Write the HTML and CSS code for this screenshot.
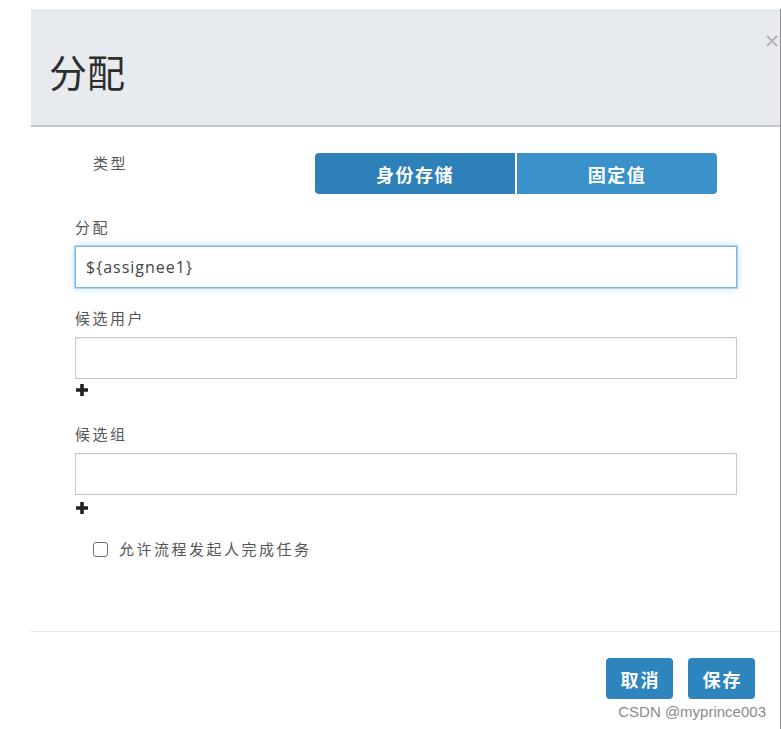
FILE: index.html
```html
<!DOCTYPE html>
<html lang="zh-CN">
<head>
<meta charset="utf-8">
<title>分配</title>
<link rel="stylesheet" href="styles.css">
</head>
<body>
<div class="page">
  <div class="modal">
    <div class="modal-header">
      <h1 class="modal-title">分配</h1>
      <span class="close" aria-label="close">
        <svg width="12" height="12" viewBox="0 0 12 12"><path d="M1 1 L11 11 M11 1 L1 11" stroke="#b2b4b6" stroke-width="1.8" fill="none"/></svg>
      </span>
    </div>
    <div class="modal-body">
      <div class="type-row">
        <div class="type-label">类型</div>
        <div class="btn-group">
          <button class="seg seg-active">身份存储</button>
          <button class="seg seg-second">固定值</button>
        </div>
      </div>

      <div class="field first">
        <label class="field-label">分配</label>
        <div class="input focused">${assignee1}</div>
      </div>

      <div class="field">
        <label class="field-label">候选用户</label>
        <div class="input"></div>
        <div class="plus plus-a">
          <svg width="14" height="14" viewBox="0 0 14 14"><path d="M7 1 V13 M1 7 H13" stroke="#222" stroke-width="3.6" fill="none"/></svg>
        </div>
      </div>

      <div class="field after-plus">
        <label class="field-label">候选组</label>
        <div class="input"></div>
        <div class="plus plus-b">
          <svg width="14" height="14" viewBox="0 0 14 14"><path d="M7 1 V13 M1 7 H13" stroke="#222" stroke-width="3.6" fill="none"/></svg>
        </div>
      </div>

      <div class="check-row">
        <input type="checkbox" class="check">
        <span class="check-text">允许流程发起人完成任务</span>
      </div>
    </div>
    <div class="modal-footer">
      <button class="btn">取消</button>
      <button class="btn">保存</button>
    </div>
  </div>
  <div class="watermark">CSDN @myprince003</div>
</div>
</body>
</html>
```

FILE: styles.css
```css
* { box-sizing: border-box; }

html, body {
  margin: 0;
  padding: 0;
  background: #ffffff;
}

body {
  width: 781px;
  height: 729px;
  overflow: hidden;
  font-family: "Noto Sans CJK SC", "Noto Sans", sans-serif;
}

.page {
  position: relative;
  height: 729px;
  padding: 9px 0 0 31px;
}

.modal {
  width: 750px;
  height: 720px;
  border-right: 1px solid #8e8e8e;
  background: #fff;
}

.modal-header {
  display: flex;
  justify-content: space-between;
  align-items: flex-start;
  height: 118px;
  padding: 26px 2px 0 18px;
  background: #e7ebef;
  border-bottom: 2px solid #bfc6cd;
}

.modal-title {
  margin: 17px 0 0 0;
  font-size: 38px;
  line-height: 38px;
  font-weight: 400;
  color: #2e2e2e;
}

.close {
  display: block;
  width: 12px;
  height: 12px;
}
.close svg { display: block; }

.modal-body {
  display: flex;
  flex-direction: column;
  padding: 26px 0 72px 44px;
}

.type-row {
  display: flex;
  align-items: flex-start;
  height: 40px;
}

.type-label {
  width: 240px;
  padding-left: 18px;
  font-size: 15px;
  line-height: 20px;
  letter-spacing: 2.5px;
  color: #555;
}

.btn-group {
  display: flex;
  gap: 2px;
}

.seg {
  width: 200px;
  height: 41px;
  border: none;
  color: #fff;
  font-family: "Noto Sans CJK SC", sans-serif;
  font-size: 18px;
  font-weight: 700;
  letter-spacing: 1.5px;
  padding: 0;
}
.seg-active {
  background: #2e80b9;
  border-radius: 4px 0 0 4px;
}
.seg-second {
  background: #3b92ca;
  border-radius: 0 4px 4px 0;
}

.field { margin-top: 20px; }
.field.first { margin-top: 24px; }
.field.after-plus { margin-top: 27px; }

.field-label {
  display: block;
  margin-bottom: 9px;
  font-size: 15px;
  line-height: 20px;
  letter-spacing: 2.5px;
  color: #555;
}

.input {
  width: 662px;
  height: 42px;
  border: 1px solid #c9c9c9;
  background: #fff;
  box-shadow: inset 0 1px 1px rgba(0,0,0,0.06);
  padding: 0 10px;
  font-family: "Open Sans", "Noto Sans", sans-serif;
  font-size: 16px;
  line-height: 40px;
  letter-spacing: 1px;
  color: #444;
}

.input.focused {
  border-color: #74b6ea;
  box-shadow: 0 0 0 1px rgba(116,182,234,0.45), 0 0 8px rgba(102,175,233,0.45);
}

.plus {
  height: 14px;
  margin-top: 4px;
}
.plus-b { margin-top: 6px; }
.plus svg { display: block; }

.check-row {
  display: flex;
  align-items: center;
  gap: 11px;
  margin-top: 24px;
  padding-left: 18px;
  height: 20px;
}

.check {
  appearance: none;
  -webkit-appearance: none;
  margin: 0;
  width: 15px;
  height: 15px;
  border: 1.5px solid #6e6e6e;
  border-radius: 3px;
  background: #fff;
}

.check-text {
  font-size: 15px;
  line-height: 20px;
  letter-spacing: 2.5px;
  color: #555;
}

.modal-footer {
  display: flex;
  justify-content: flex-end;
  gap: 15px;
  border-top: 1px solid #e6e6e6;
  padding: 26px 25px 0 0;
}

.btn {
  width: 67px;
  height: 41px;
  border: none;
  border-radius: 4px;
  background: #2e84bd;
  color: #fff;
  font-family: "Noto Sans CJK SC", sans-serif;
  font-size: 18px;
  font-weight: 700;
  letter-spacing: 2px;
  padding: 0 0 0 2px;
}

.watermark {
  position: absolute;
  right: 15px;
  bottom: 8px;
  font-family: "Liberation Sans", Arial, sans-serif;
  font-size: 15px;
  line-height: 18px;
  color: #8a8a8a;
  text-shadow: 0 0 2px #fff;
}
```
